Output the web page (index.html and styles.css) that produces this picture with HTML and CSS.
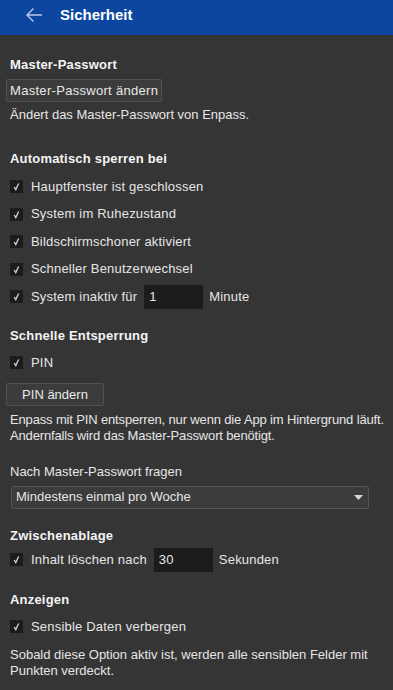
FILE: index.html
```html
<!DOCTYPE html>
<html>
<head>
    <title>Sicherheit</title>
    <meta name="viewport" content="width=device-width, initial-scale=1">
    <link rel="stylesheet" href="styles.css">
</head>
<body>
    <div class="app-bar">
        <svg class="back" width="18" height="16" viewBox="0 0 18 16">
            <path d="M17 8H2M8.5 1.5L2 8l6.5 6.5" fill="none" stroke="#b9c9e8" stroke-width="1.4"/>
        </svg>
        <h1>Sicherheit</h1>
    </div>

    <div class="content">
        <h2 class="first">Master-Passwort</h2>
        <button class="btn btn-tight">Master-Passwort ändern</button>
        <p class="hint">Ändert das Master-Passwort von Enpass.</p>

        <h2 class="section">Automatisch sperren bei</h2>
        <div class="checks">
            <label class="check"><span class="box"><svg viewBox="0 0 13 13"><path d="M4.2 7l1.6 2.6L8.6 3.6"/></svg></span>Hauptfenster ist geschlossen</label>
            <label class="check"><span class="box"><svg viewBox="0 0 13 13"><path d="M4.2 7l1.6 2.6L8.6 3.6"/></svg></span>System im Ruhezustand</label>
            <label class="check"><span class="box"><svg viewBox="0 0 13 13"><path d="M4.2 7l1.6 2.6L8.6 3.6"/></svg></span>Bildschirmschoner aktiviert</label>
            <label class="check"><span class="box"><svg viewBox="0 0 13 13"><path d="M4.2 7l1.6 2.6L8.6 3.6"/></svg></span>Schneller Benutzerwechsel</label>
            <label class="check"><span class="box"><svg viewBox="0 0 13 13"><path d="M4.2 7l1.6 2.6L8.6 3.6"/></svg></span>System inaktiv für <span class="num">1</span> Minute</label>
        </div>

        <h2 class="section s2">Schnelle Entsperrung</h2>
        <label class="check single"><span class="box"><svg viewBox="0 0 13 13"><path d="M4.2 7l1.6 2.6L8.6 3.6"/></svg></span>PIN</label>
        <button class="btn btn-pin">PIN ändern</button>
        <p class="hint two">Enpass mit PIN entsperren, nur wenn die App im Hintergrund läuft.<br>Andernfalls wird das Master-Passwort benötigt.</p>

        <div class="field-label">Nach Master-Passwort fragen</div>
        <div class="select">
            <span>Mindestens einmal pro Woche</span>
            <svg width="9" height="5" viewBox="0 0 9 5"><path d="M0 0h9L4.5 5z" fill="#d8d8d8"/></svg>
        </div>

        <h2 class="section s3">Zwischenablage</h2>
        <label class="check single wide"><span class="box"><svg viewBox="0 0 13 13"><path d="M4.2 7l1.6 2.6L8.6 3.6"/></svg></span>Inhalt löschen nach <span class="num">30</span> Sekunden</label>

        <h2 class="section s4">Anzeigen</h2>
        <label class="check single"><span class="box"><svg viewBox="0 0 13 13"><path d="M4.2 7l1.6 2.6L8.6 3.6"/></svg></span>Sensible Daten verbergen</label>
        <p class="hint last">Sobald diese Option aktiv ist, werden alle sensiblen Felder mit Punkten verdeckt.</p>
    </div>
</body>
</html>
```

FILE: styles.css
```css
* {
    margin: 0;
    padding: 0;
    box-sizing: border-box;
}

body {
    font-family: 'Liberation Sans', Arial, sans-serif;
    font-size: 13px;
    line-height: 16px;
    background: #353535;
    color: #e6e6e6;
    width: 393px;
    height: 690px;
    overflow: hidden;
}

.app-bar {
    height: 35px;
    background: #0c46a0;
    display: flex;
    align-items: center;
    padding: 0 0 5px 25px;
}

.back {
    display: block;
    margin-right: 17px;
}

.app-bar h1 {
    font-size: 15px;
    font-weight: bold;
    color: #fff;
}

.content {
    padding: 0 10px;
}

h2 {
    font-size: 13px;
    font-weight: bold;
    color: #f4f4f4;
    line-height: 16px;
    letter-spacing: 0.2px;
}

h2.first {
    margin-top: 22px;
}

h2.section {
    margin-top: 28px;
}

h2.s2 {
    margin-top: 17px;
}

h2.s3 {
    margin-top: 19px;
}

h2.s4 {
    margin-top: 18px;
}

.btn {
    display: block;
    height: 23px;
    background: #3c3c3c;
    border: 1px solid #525252;
    border-radius: 2px;
    color: #e8e8e8;
    font-family: inherit;
    font-size: 13px;
    margin-left: -4px;
}

.btn-tight {
    margin-top: 6px;
    padding: 0 3px;
    letter-spacing: 0.3px;
}

.btn-pin {
    margin-top: 6px;
    width: 98px;
}

.hint {
    margin-top: 5px;
}

.hint.two {
    margin-top: 6px;
    white-space: nowrap;
    letter-spacing: -0.15px;
}

.hint.last {
    margin-top: 6px;
}

.checks {
    margin-top: 6px;
}

.check {
    display: flex;
    align-items: center;
    height: 27.5px;
    letter-spacing: 0.2px;
}

.check.single {
    margin-top: 5px;
    height: 28px;
}

.check.wide {
    margin-top: 2px;
}

.box {
    width: 13px;
    height: 13px;
    background: #1c1c1c;
    margin-right: 8px;
    flex-shrink: 0;
}

.box svg {
    display: block;
    width: 13px;
    height: 13px;
    fill: none;
    stroke: #d4d4d4;
    stroke-width: 1.3;
}

.num {
    display: inline-block;
    width: 59px;
    height: 24px;
    line-height: 24px;
    background: #1c1c1c;
    padding-left: 5px;
    margin: 0 6px 0 7px;
}

.field-label {
    margin-top: 20px;
}

.select {
    margin-top: 6px;
    width: 358px;
    height: 23px;
    margin-left: 1px;
    background: #3c3c3c;
    border: 1px solid #555;
    border-radius: 2px;
    display: flex;
    align-items: center;
    justify-content: space-between;
    padding: 0 5px 0 4px;
}

.select svg {
    display: block;
}
```
